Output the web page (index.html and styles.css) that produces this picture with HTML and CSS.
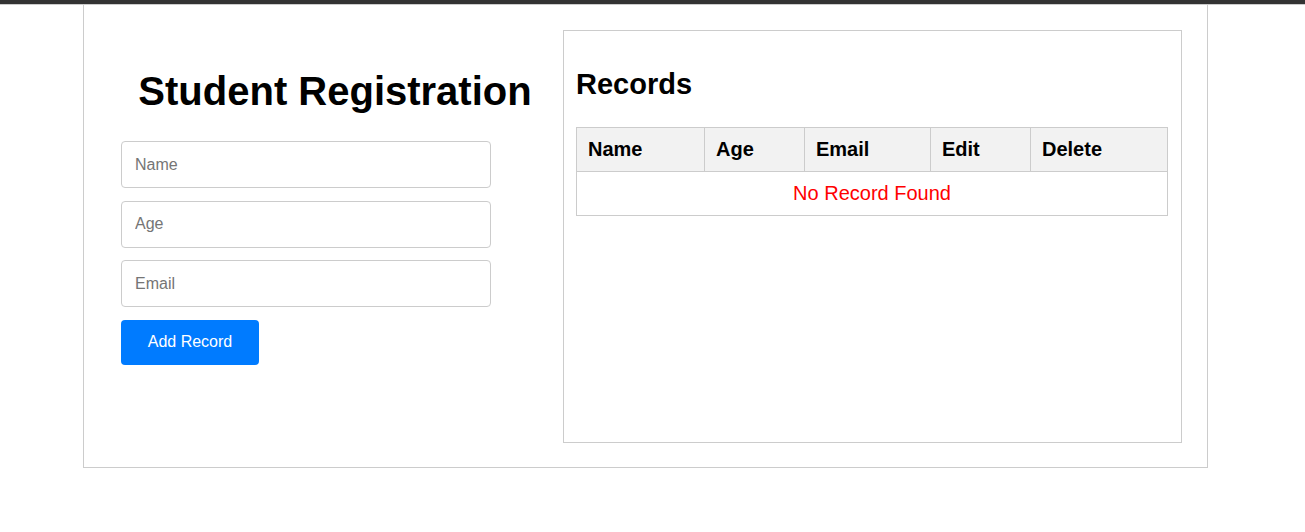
FILE: index.html
```html
<!DOCTYPE html>
<html lang="en">
<head>
<meta charset="utf-8">
<title>Student Registration</title>
<link rel="stylesheet" href="styles.css">
</head>
<body>
<div class="topbar"></div>
<div class="container">
  <div class="form-col">
    <h1 class="title">Student Registration</h1>
    <form class="form">
      <input class="field" type="text" placeholder="Name">
      <input class="field" type="text" placeholder="Age">
      <input class="field" type="text" placeholder="Email">
      <button class="btn" type="button">Add Record</button>
    </form>
  </div>
  <div class="records">
    <h2 class="records-title">Records</h2>
    <table class="table">
      <colgroup>
        <col class="c1"><col class="c2"><col class="c3"><col class="c4"><col class="c5">
      </colgroup>
      <thead>
        <tr><th>Name</th><th>Age</th><th>Email</th><th>Edit</th><th>Delete</th></tr>
      </thead>
      <tbody>
        <tr><td class="empty" colspan="5">No Record Found</td></tr>
      </tbody>
    </table>
  </div>
</div>
</body>
</html>
```
FILE: styles.css
```css
* { box-sizing: border-box; }
html, body { margin: 0; padding: 0; background: #fff; }
body { font-family: "Liberation Sans", Arial, sans-serif; color: #000; }

.topbar {
  height: 5px;
  background: #333;
  border-bottom: 1px solid #ccc;
}

.container {
  width: 1125px;
  margin-left: 83px;
  border: 1px solid #ccc;
  border-top: none;
  padding: 25px 25px 24px 25px;
  display: flex;
  gap: 14px;
}

.form-col {
  width: 440px;
  padding-left: 12px;
}

.title {
  font-size: 40px;
  font-weight: bold;
  text-align: center;
  margin: 38px 0 27px;
  line-height: 46px;
}

.form { display: flex; flex-direction: column; align-items: flex-start; }

.field {
  width: 370px;
  height: 47px;
  padding: 0 13px;
  font-family: "Liberation Sans", Arial, sans-serif;
  font-size: 16px;
  border: 1px solid #ccc;
  border-radius: 4px;
  margin-bottom: 12.5px;
  outline: none;
}
.field::placeholder { color: #757575; }

.btn {
  width: 138px;
  height: 45px;
  margin-top: 0.5px;
  background: #007bff;
  color: #fff;
  border: none;
  border-radius: 4px;
  font-family: "Liberation Sans", Arial, sans-serif;
  font-size: 16px;
  padding: 0 0 2px;
  cursor: pointer;
}

.records {
  width: 619px;
  height: 413px;
  border: 1px solid #ccc;
  padding: 12px;
}

.records-title {
  font-size: 29px;
  font-weight: bold;
  margin: 25px 0 26px;
  line-height: 33px;
}

.table {
  width: 591px;
  border-collapse: collapse;
  table-layout: fixed;
  font-size: 20px;
}
.c1 { width: 128px; }
.c2 { width: 100px; }
.c3 { width: 126px; }
.c4 { width: 100px; }
.c5 { width: 137px; }

.table th, .table td {
  border: 1px solid #ccc;
  padding: 10px 11px;
  line-height: 23px;
}
.table th {
  background: #f2f2f2;
  text-align: left;
  font-weight: bold;
}
.table td.empty {
  text-align: center;
  color: #ff0000;
}
```
